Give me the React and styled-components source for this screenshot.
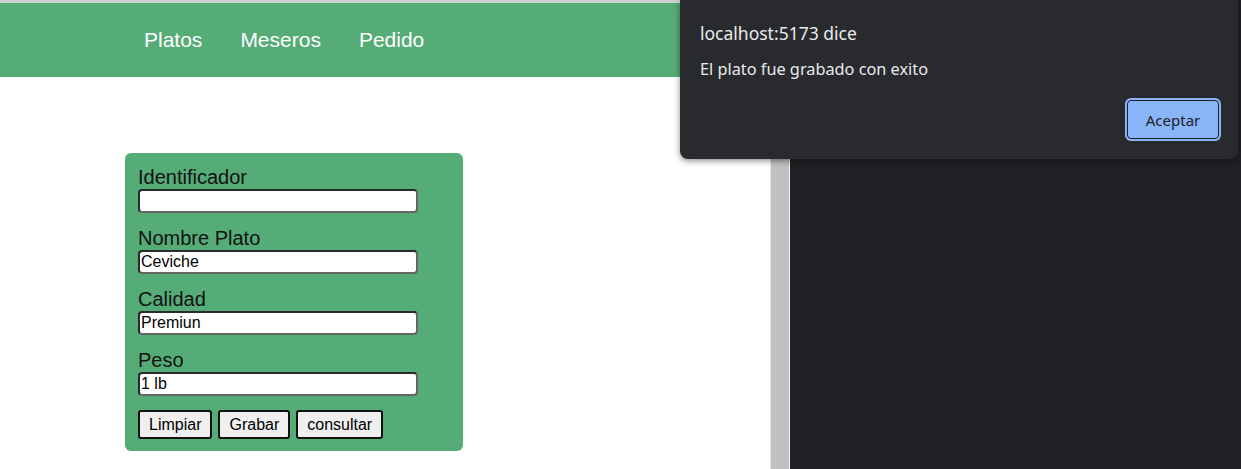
import React from "react"
import styled, { createGlobalStyle } from "styled-components"

const GlobalStyle = createGlobalStyle`
  html, body {
    margin: 0;
    padding: 0;
    height: 469px;
    overflow: hidden;
    background: #202124;
  }
  #root {
    height: 100%;
  }
`

const Screen = styled.div`
  position: relative;
  display: flex;
  height: 469px;
  width: 1241px;
  background: #202124;
`

const Page = styled.div`
  width: 770px;
  height: 100%;
  background: #fff;
  border-right: 1px solid #e6e6e6;
  display: flex;
  flex-direction: column;
  font-family: "Liberation Sans", Arial, sans-serif;
`

const Scrollbar = styled.div`
  width: 18px;
  height: 100%;
  background: #c1c1c1;
  border-right: 1px solid #f4f4f4;
`

const TopStrip = styled.div`
  height: 3px;
  background: #cfcfcf;
`

const NavBar = styled.nav`
  height: 74px;
  background: #56ac77;
  display: flex;
  align-items: center;
  padding-left: 144px;
  gap: 38px;
`

const NavLink = styled.a`
  color: #fff;
  font-size: 21px;
  text-decoration: none;
  cursor: pointer;
`

const FormCard = styled.form`
  margin: 76px 0 0 125px;
  width: 338px;
  box-sizing: border-box;
  background: #56ac77;
  border-radius: 6px;
  padding: 13px 13px 12px;
  display: flex;
  flex-direction: column;
`

const Field = styled.div`
  display: flex;
  flex-direction: column;
  margin-bottom: 14px;
`

const Label = styled.label`
  font-size: 20px;
  line-height: 23px;
  color: #111;
`

const Input = styled.input`
  width: 280px;
  height: 24px;
  box-sizing: border-box;
  border: 2px solid #2a2a2a;
  border-bottom-color: #666;
  border-right-color: #666;
  border-radius: 4px;
  padding: 1px 1px;
  font-family: "Liberation Sans", Arial, sans-serif;
  font-size: 16px;
  color: #000;
  background: #fff;
  outline: none;
`

const ButtonRow = styled.div`
  display: flex;
  gap: 6px;
`

const Button = styled.button`
  height: 29px;
  box-sizing: border-box;
  border: 2px solid #111;
  border-radius: 3px;
  background: #efefef;
  padding: 0 9px;
  font-family: "Liberation Sans", Arial, sans-serif;
  font-size: 16px;
  color: #000;
  cursor: pointer;
`

const Dialog = styled.div`
  position: absolute;
  left: 680px;
  top: 0;
  width: 558px;
  height: 159px;
  box-sizing: border-box;
  background: #292a2d;
  border-radius: 0 0 8px 8px;
  box-shadow: 0 2px 6px rgba(0, 0, 0, 0.45);
  padding: 20px 19px 0 20px;
  display: flex;
  flex-direction: column;
  font-family: "Noto Sans", "Open Sans", sans-serif;
  color: #e8eaed;
`

const DialogTitle = styled.div`
  font-size: 17.5px;
  line-height: 26px;
`

const DialogMessage = styled.div`
  font-size: 16.3px;
  line-height: 22px;
  margin-top: 12px;
`

const DialogActions = styled.div`
  display: flex;
  justify-content: flex-end;
  margin-top: 20px;
`

const AcceptButton = styled.button`
  width: 92px;
  height: 39px;
  box-sizing: border-box;
  background: #8ab4f8;
  border: 1px solid #202124;
  border-radius: 4px;
  box-shadow: 0 0 0 2px #8ab4f8;
  font-family: "Noto Sans", "Open Sans", sans-serif;
  font-size: 15px;
  color: #202124;
  outline: none;
  cursor: pointer;
`

const fields = [
  { label: "Identificador", value: "" },
  { label: "Nombre Plato", value: "Ceviche" },
  { label: "Calidad", value: "Premiun" },
  { label: "Peso", value: "1 lb" },
]

const App = () => {
  return (
    <Screen>
      <GlobalStyle />
      <Page>
        <TopStrip />
        <NavBar>
          <NavLink>Platos</NavLink>
          <NavLink>Meseros</NavLink>
          <NavLink>Pedido</NavLink>
        </NavBar>
        <FormCard onSubmit={e => e.preventDefault()}>
          {fields.map(f => (
            <Field key={f.label}>
              <Label>{f.label}</Label>
              <Input defaultValue={f.value} />
            </Field>
          ))}
          <ButtonRow>
            <Button type="button">Limpiar</Button>
            <Button type="button">Grabar</Button>
            <Button type="button">consultar</Button>
          </ButtonRow>
        </FormCard>
      </Page>
      <Scrollbar />
      <Dialog>
        <DialogTitle>localhost:5173 dice</DialogTitle>
        <DialogMessage>El plato fue grabado con exito</DialogMessage>
        <DialogActions>
          <AcceptButton>Aceptar</AcceptButton>
        </DialogActions>
      </Dialog>
    </Screen>
  )
}

export default App
